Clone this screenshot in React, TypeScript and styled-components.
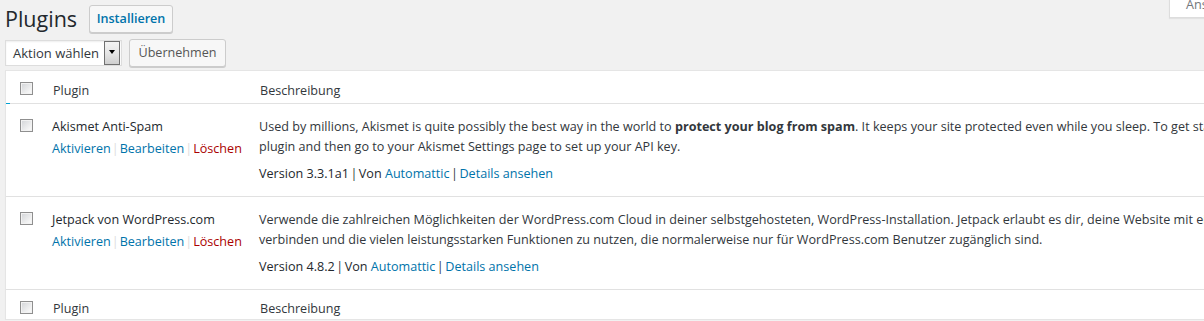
import { createGlobalStyle, styled } from "styled-components";

const FONT = `"Open Sans", "Noto Sans", "Liberation Sans", sans-serif`;

const GlobalStyle = createGlobalStyle`
  html, body {
    margin: 0;
    padding: 0;
    background: #f1f1f1;
    overflow: hidden;
  }
  body {
    font-family: ${FONT};
    font-size: 12.6px;
    line-height: 20px;
    color: #32373c;
  }
`;

interface PluginRow {
  name: string;
  lines: React.ReactNode[];
  version: string;
}

const plugins: PluginRow[] = [
  {
    name: "Akismet Anti-Spam",
    lines: [
      <>
        Used by millions, Akismet is quite possibly the best way in the world to{" "}
        <strong>protect your blog from spam</strong>. It keeps your site protected even while you
        sleep. To get started: activate the Akismet
      </>,
      "plugin and then go to your Akismet Settings page to set up your API key.",
    ],
    version: "3.3.1a1",
  },
  {
    name: "Jetpack von WordPress.com",
    lines: [
      "Verwende die zahlreichen Möglichkeiten der WordPress.com Cloud in deiner selbstgehosteten, WordPress-Installation. Jetpack erlaubt es dir, deine Website mit einem WordPress.com-Konto zu",
      "verbinden und die vielen leistungsstarken Funktionen zu nutzen, die normalerweise nur für WordPress.com Benutzer zugänglich sind.",
    ],
    version: "4.8.2",
  },
];

const Page = styled.div`
  width: 1440px;
  padding-left: 5px;
`;

const TitleRow = styled.div`
  display: grid;
  grid-template-columns: 84px 1080px auto;
  align-items: start;
  height: 28px;
  padding-top: 5px;
`;

const Title = styled.h1`
  margin: 0;
  font-size: 21.5px;
  font-weight: 400;
  line-height: 27px;
  color: #23282d;
`;

const Button = styled.button<{ $accent?: boolean; $w: number }>`
  box-sizing: border-box;
  width: ${(p) => p.$w}px;
  height: 28px;
  padding: 0 0 1px;
  border: 1px solid #ccc;
  border-radius: 3px;
  background: #f7f7f7;
  box-shadow: 0 1px 0 #ccc;
  font-family: ${FONT};
  font-size: 12.6px;
  font-weight: ${(p) => (p.$accent ? 600 : 400)};
  color: ${(p) => (p.$accent ? "#0073aa" : "#555")};
  justify-self: start;
`;

const ScreenTab = styled.div`
  margin-top: -9px;
  padding: 0 16px 3px;
  background: #fff;
  border: 1px solid #ddd;
  border-top: none;
  box-shadow: 0 1px 1px rgba(0, 0, 0, 0.06);
  color: #72777c;
  line-height: 18px;
  white-space: nowrap;
`;

const BulkRow = styled.div`
  display: flex;
  align-items: center;
  gap: 7px;
  margin-top: 6px;
  height: 28px;
`;

const Select = styled.div`
  box-sizing: border-box;
  display: flex;
  align-items: center;
  width: 117px;
  height: 26px;
  padding: 0 1px 0 7px;
  background: #fff;
  border: 1px solid #ddd;
  box-shadow: inset 0 1px 2px rgba(0, 0, 0, 0.07);
  color: #32373c;
  font-size: 13px;
`;

const SelectLabel = styled.span`
  flex: 1;
  white-space: nowrap;
`;

const SelectArrow = styled.span`
  box-sizing: border-box;
  display: flex;
  align-items: center;
  justify-content: center;
  width: 16px;
  height: 24px;
  border: 1px solid #707070;
  background: linear-gradient(#f4f4f4, #e6e6e6 50%, #cfcfcf);

  &::after {
    content: "";
    margin-top: -2px;
    border-left: 3.5px solid transparent;
    border-right: 3.5px solid transparent;
    border-top: 4px solid #000;
  }
`;

const Table = styled.div`
  margin-top: 3px;
  background: #fff;
  border: 1px solid #e5e5e5;
  box-shadow: 0 1px 1px rgba(0, 0, 0, 0.04);
`;

const HeadLine = styled.div`
  position: relative;
  height: 32px;
  border-bottom: 1px solid #e1e1e1;

  &::before {
    content: "";
    position: absolute;
    left: 0;
    bottom: -1px;
    width: 4px;
    height: 1px;
    background: #00a0d2;
  }
`;

const HeadGrid = styled.div<{ $top: number }>`
  display: grid;
  grid-template-columns: 36px 207px 1fr;
  padding-top: ${(p) => p.$top}px;
  color: #32373c;
`;

const CheckCell = styled.div<{ $top: number }>`
  padding: ${(p) => p.$top}px 0 0 14px;
`;

const Checkbox = styled.span`
  display: block;
  box-sizing: border-box;
  width: 13px;
  height: 13px;
  border: 1px solid #8f8f8f;
  background: linear-gradient(135deg, #d2d4d7, #f6f6f6 80%);
  box-shadow: inset 0 0 0 1px #f2f2f2;
`;

const Cell = styled.div<{ $indent: number }>`
  padding-left: ${(p) => p.$indent}px;
  white-space: nowrap;
`;

const Name = styled.div`
  color: #23282d;
`;

const Actions = styled.div`
  margin-top: 2px;
`;

const Link = styled.a<{ $danger?: boolean }>`
  color: ${(p) => (p.$danger ? "#a00" : "#0073aa")};
  text-decoration: none;
`;

const Sep = styled.span<{ $light?: boolean }>`
  color: ${(p) => (p.$light ? "#ddd" : "#32373c")};
  padding: 0 ${(p) => (p.$light ? 1 : 1.5)}px;
`;

const Desc = styled.div`
  color: #32373c;

  strong {
    font-weight: 700;
  }
`;

const Meta = styled.div`
  margin-top: 7px;
  color: #23282d;
`;

const PluginItem = styled.div`
  border-bottom: 1px solid #e1e1e1;
`;

const ItemGrid = styled.div`
  display: grid;
  grid-template-columns: 36px 207px 1fr;
  padding: 13px 0 12px;
`;

const HeaderCells = ({ top, box }: { top: number; box: number }) => (
  <HeadGrid $top={top}>
    <CheckCell $top={box}>
      <Checkbox />
    </CheckCell>
    <Cell $indent={11}>Plugin</Cell>
    <Cell $indent={11}>Beschreibung</Cell>
  </HeadGrid>
);

export default function App() {
  return (
    <>
      <GlobalStyle />
      <Page>
        <TitleRow>
          <Title>Plugins</Title>
          <Button $accent $w={84}>
            Installieren
          </Button>
          <ScreenTab>Ansicht anpassen ▾</ScreenTab>
        </TitleRow>
        <BulkRow>
          <Select>
            <SelectLabel>Aktion wählen</SelectLabel>
            <SelectArrow />
          </Select>
          <Button $w={97}>Übernehmen</Button>
        </BulkRow>
        <Table>
          <HeadLine>
            <HeaderCells top={10} box={1} />
          </HeadLine>
          {plugins.map((p) => (
            <PluginItem key={p.name}>
              <ItemGrid>
                <CheckCell $top={2}>
                  <Checkbox />
                </CheckCell>
                <Cell $indent={10}>
                  <Name>{p.name}</Name>
                  <Actions>
                    <Link href="#">Aktivieren</Link>
                    <Sep $light>|</Sep>
                    <Link href="#">Bearbeiten</Link>
                    <Sep $light>|</Sep>
                    <Link href="#" $danger>
                      Löschen
                    </Link>
                  </Actions>
                </Cell>
                <Cell $indent={10}>
                  <Desc>
                    {p.lines.map((l, i) => (
                      <div key={i}>{l}</div>
                    ))}
                  </Desc>
                  <Meta>
                    Version {p.version}
                    <Sep>|</Sep>Von <Link href="#">Automattic</Link>
                    <Sep>|</Sep>
                    <Link href="#">Details ansehen</Link>
                  </Meta>
                </Cell>
              </ItemGrid>
            </PluginItem>
          ))}
          <HeaderCells top={9} box={2} />
        </Table>
      </Page>
    </>
  );
}
